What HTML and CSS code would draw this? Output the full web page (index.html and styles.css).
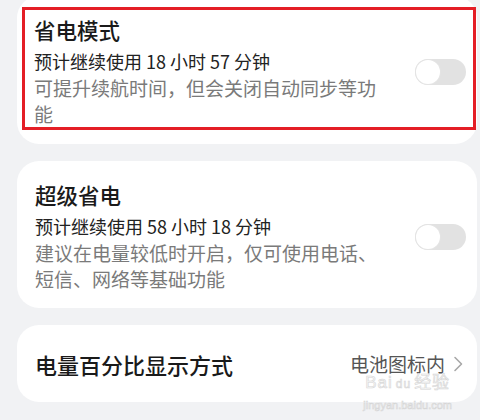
FILE: index.html
```html
<!DOCTYPE html>
<html lang="zh-CN">
<head>
<meta charset="utf-8">
<title>电池</title>
<link rel="stylesheet" href="styles.css">
</head>
<body>
<div class="page">
  <section class="card card-first">
    <div class="highlight">
      <div class="info">
        <div class="title">省电模式</div>
        <div class="estimate">预计继续使用 18 小时 57 分钟</div>
        <div class="desc">可提升续航时间，但会关闭自动同步等功能</div>
      </div>
      <span class="switch"><span class="knob"></span></span>
    </div>
  </section>

  <section class="card card-plain">
    <div class="info">
      <div class="title">超级省电</div>
      <div class="estimate">预计继续使用 58 小时 18 分钟</div>
      <div class="desc">建议在电量较低时开启，仅可使用电话、短信、网络等基础功能</div>
    </div>
    <span class="switch"><span class="knob"></span></span>
  </section>

  <section class="card card-row">
    <div class="title">电量百分比显示方式</div>
    <div class="value">
      <span>电池图标内</span>
      <svg class="chevron" width="10" height="16" viewBox="0 0 10 16"><path d="M2 1.5 L8.5 8 L2 14.5" fill="none" stroke="#a8a8a8" stroke-width="1.6" stroke-linecap="round" stroke-linejoin="round"/></svg>
    </div>
  </section>
</div>
<div class="watermark">
  <div class="wm-logo">Bai<span class="wm-du">du</span>经验</div>
  <div class="wm-url">jingyan.baidu.com</div>
</div>
</body>
</html>
```

FILE: styles.css
```css
* { box-sizing: border-box; }
html, body {
  margin: 0;
  padding: 0;
  background: #f1f2f4;
  width: 480px;
  height: 420px;
  overflow: hidden;
}
body {
  font-family: "Noto Sans CJK SC", "Noto Sans", sans-serif;
  color: #1a1a1a;
  position: relative;
}
.page {
  display: flex;
  flex-direction: column;
  gap: 17px;
  padding: 0 3px 0 17px;
  margin-top: -4px;
}
.card {
  background: #ffffff;
  border-radius: 22px;
}
.card-first {
  padding: 11px 1px 14px 5px;
}
.highlight {
  border: 3px solid #e41e26;
  display: flex;
  align-items: center;
  padding: 6px 7px 0 9px;
}
.card-plain {
  display: flex;
  align-items: center;
  padding: 20px 11px 16px 18px;
}
.info {
  width: 352px;
  display: flex;
  flex-direction: column;
}
.title {
  font-size: 21.5px;
  line-height: 28px;
  font-weight: 500;
  color: #1a1a1a;
}
.estimate {
  font-size: 18px;
  line-height: 28px;
  margin-top: 3px;
  color: #222222;
}
.desc {
  font-size: 19px;
  line-height: 26px;
  color: #7a7a7a;
}
.switch {
  margin-left: auto;
  width: 51px;
  height: 26px;
  border-radius: 13px;
  background: #e2e2e2;
  display: flex;
  align-items: center;
  padding: 1px;
}
.knob {
  width: 24px;
  height: 24px;
  border-radius: 50%;
  background: #ffffff;
  box-shadow: 0 0 0 1px #e4e4e4;
}
.card-row {
  height: 77px;
  display: flex;
  align-items: center;
  justify-content: space-between;
  padding: 0 14px 0 18px;
}
.card-row .title {
  font-size: 22px;
  font-weight: 500;
}
.value {
  display: flex;
  align-items: center;
  gap: 8px;
  font-size: 19px;
  line-height: 22px;
  color: #555555;
}
.chevron { display: block; }
.watermark {
  position: absolute;
  right: 28px;
  bottom: 9px;
  display: flex;
  flex-direction: column;
  align-items: center;
  color: #f7f7f7;
  -webkit-text-stroke: 0.6px #d6d6d6;
  font-family: "Liberation Sans", "Noto Sans CJK SC", sans-serif;
}
.wm-logo {
  font-size: 17px;
  line-height: 14px;
  letter-spacing: 1px;
}
.wm-du {
  font-size: 12px;
  margin: 0 3px;
}
.wm-url {
  font-size: 11px;
  line-height: 11px;
  margin-top: 9px;
}
```
